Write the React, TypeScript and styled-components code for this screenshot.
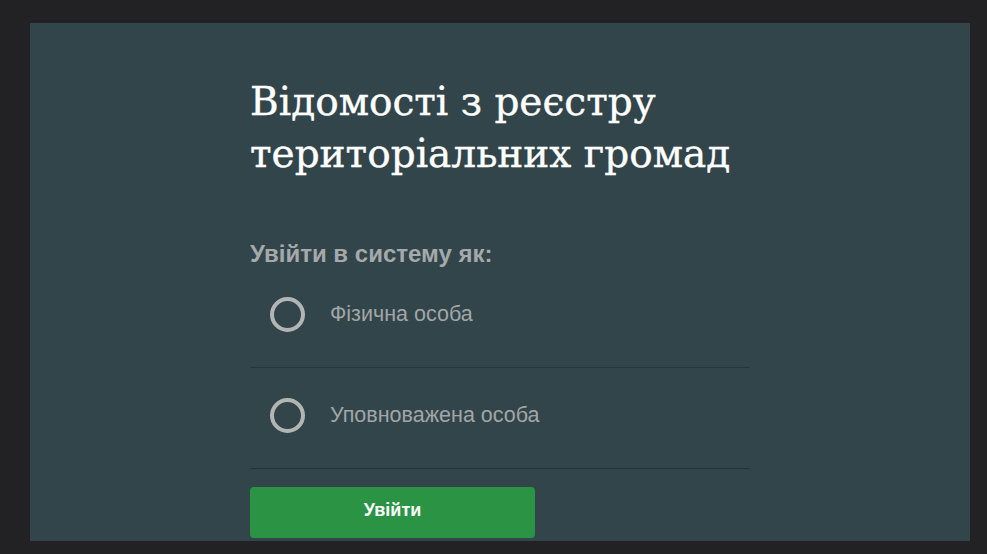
import React from "react";
import styled, { createGlobalStyle } from "styled-components";

const Global = createGlobalStyle`
  html, body { margin: 0; padding: 0; background: #222124; }
  body { font-family: "Liberation Sans", Arial, sans-serif; }
`;

const Page = styled.div`
  width: 987px;
  height: 554px;
  box-sizing: border-box;
  padding: 23px 17px 13px 30px;
  background: #222124;
  overflow: hidden;
`;

const Panel = styled.main`
  height: 100%;
  background: #31454a;
  display: flex;
  justify-content: center;
`;

const Column = styled.div`
  width: 500px;
  padding-top: 53px;
  display: flex;
  flex-direction: column;
`;

const Title = styled.h1`
  margin: 0;
  font-family: "DejaVu Serif", serif;
  font-weight: 400;
  font-size: 39px;
  line-height: 52px;
  color: #ffffff;
  -webkit-text-stroke: 0.4px #ffffff;
`;

const Legend = styled.div`
  margin-top: 61px;
  font-weight: 700;
  font-size: 24px;
  line-height: 26px;
  color: #a6a9aa;
`;

const Options = styled.div`
  display: flex;
  flex-direction: column;
`;

const Option = styled.label`
  display: flex;
  align-items: center;
  box-sizing: border-box;
  height: 101px;
  padding: 0 0 5px 20px;
  gap: 25px;
  border-bottom: 1px solid #25363a;
  cursor: pointer;
`;

const Radio = styled.span`
  width: 35px;
  height: 35px;
  box-sizing: border-box;
  border-radius: 50%;
  border: 4px solid #b3b5b5;
`;

const OptionText = styled.span`
  font-size: 21.5px;
  color: #a3a6a7;
`;

const Button = styled.button`
  margin-top: 18px;
  width: 285px;
  height: 51px;
  padding: 0 0 4px;
  border: none;
  border-radius: 4px;
  background: #2a9444;
  color: #ffffff;
  font-family: "Liberation Sans", Arial, sans-serif;
  font-weight: 700;
  font-size: 18px;
  cursor: pointer;
`;

export default function App() {
  return (
    <>
      <Global />
      <Page>
        <Panel>
          <Column>
            <Title>
              Відомості з реєстру
              <br />
              територіальних громад
            </Title>
            <Legend>Увійти в систему як:</Legend>
            <Options>
              <Option>
                <Radio />
                <OptionText>Фізична особа</OptionText>
              </Option>
              <Option>
                <Radio />
                <OptionText>Уповноважена особа</OptionText>
              </Option>
            </Options>
            <Button>Увійти</Button>
          </Column>
        </Panel>
      </Page>
    </>
  );
}
